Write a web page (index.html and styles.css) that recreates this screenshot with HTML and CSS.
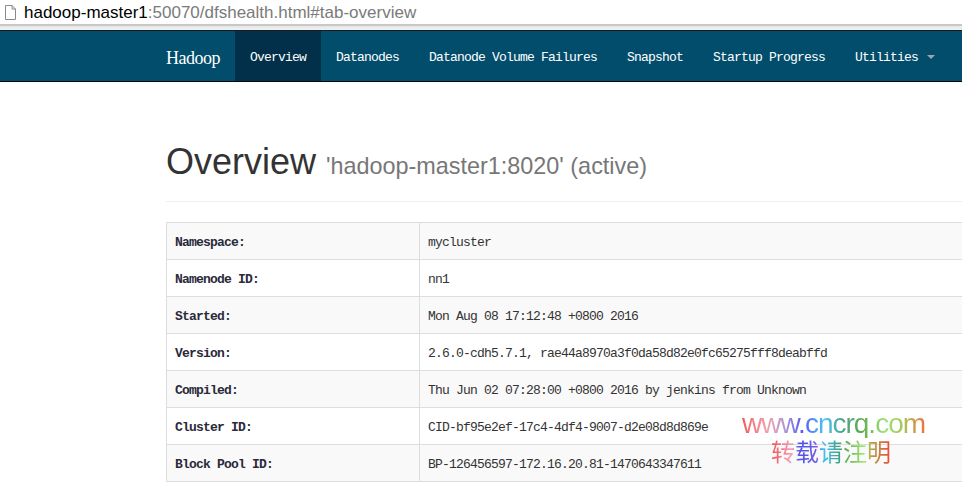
FILE: index.html
```html
<!DOCTYPE html>
<html lang="en">
<head>
<meta charset="utf-8">
<title>Namenode information</title>
<link rel="stylesheet" href="styles.css">
</head>
<body>
<div class="addr">
  <svg class="file-icon" width="11" height="15" viewBox="0 0 11 15">
    <path d="M0.5 0.5 H7 L10.5 4 V14.5 H0.5 Z" fill="#fff" stroke="#8a8a8a" stroke-width="1"/>
    <path d="M7 0.5 V4 H10.5" fill="none" stroke="#8a8a8a" stroke-width="1"/>
  </svg>
  <span class="host">hadoop-master1</span><span class="rest">:50070/dfshealth.html#tab-overview</span>
</div>
<div class="addr-shadow"></div>
<nav class="navbar">
  <div class="container nav-inner">
    <a class="brand" href="#">Hadoop</a>
    <ul class="nav">
      <li class="active"><a href="#">Overview</a></li>
      <li><a href="#">Datanodes</a></li>
      <li><a href="#">Datanode Volume Failures</a></li>
      <li><a href="#">Snapshot</a></li>
      <li><a href="#">Startup Progress</a></li>
      <li><a href="#">Utilities<span class="caret"></span></a></li>
    </ul>
  </div>
</nav>
<div class="container main">
  <div class="page-header">
    <h1>Overview <small>'hadoop-master1:8020' (active)</small></h1>
  </div>
  <table class="info">
    <colgroup><col class="c1"><col></colgroup>
    <tr><th>Namespace:</th><td>mycluster</td></tr>
    <tr><th>Namenode ID:</th><td>nn1</td></tr>
    <tr><th>Started:</th><td>Mon Aug 08 17:12:48 +0800 2016</td></tr>
    <tr><th>Version:</th><td>2.6.0-cdh5.7.1, rae44a8970a3f0da58d82e0fc65275fff8deabffd</td></tr>
    <tr><th>Compiled:</th><td>Thu Jun 02 07:28:00 +0800 2016 by jenkins from Unknown</td></tr>
    <tr><th>Cluster ID:</th><td>CID-bf95e2ef-17c4-4df4-9007-d2e08d8d869e</td></tr>
    <tr><th>Block Pool ID:</th><td>BP-126456597-172.16.20.81-1470643347611</td></tr>
  </table>
</div>
<div class="watermark">
  <div class="wm-url">www.cncrq.com</div>
  <div class="wm-cn">转载请注明</div>
</div>
</body>
</html>
```
FILE: styles.css
```css
html, body {
  margin: 0;
  padding: 0;
  overflow: hidden;
  background: #fff;
}
body {
  width: 962px;
  height: 488px;
  position: relative;
  font-family: "Liberation Sans", Arial, sans-serif;
  color: #333;
}
.addr {
  height: 22px;
  padding-top: 2px;
  line-height: 22px;
  font-size: 17px;
  white-space: nowrap;
  display: flex;
  align-items: flex-start;
}
.file-icon {
  margin: 3px 8px 0 5px;
  flex: none;
}
.addr .host { color: #000; }
.addr .rest { color: #7a7a7a; }
.addr-shadow {
  height: 6px;
  background: linear-gradient(#c8c8c8 0, #c8c8c8 2px, #e6e6e6 2px, #f2f2f2 100%);
}
.navbar {
  background: #034d6c;
  border-top: 1px solid #1a1a1a;
  border-bottom: 1px solid #080808;
  height: 50px;
}
.container {
  width: 1140px;
  margin-left: 151px;
  padding: 0 15px;
}
.nav-inner {
  display: flex;
  height: 50px;
  margin-left: 136px;
}
.brand {
  display: block;
  padding: 17px 15px 13px;
  line-height: 20px;
  font-family: "Liberation Serif", "Times New Roman", serif;
  font-size: 18px;
  letter-spacing: -0.5px;
  color: #fff;
  text-decoration: none;
}
.nav {
  display: flex;
  list-style: none;
  margin: 0;
  padding: 0;
}
.nav li a {
  display: block;
  padding: 17px 15px 13px;
  line-height: 20px;
  font-family: "Liberation Mono", "Courier New", monospace;
  font-size: 13px;
  letter-spacing: -0.8px;
  color: #fff;
  text-decoration: none;
  white-space: nowrap;
}
.nav li.active a {
  background: #02304b;
}
.caret {
  display: inline-block;
  width: 0;
  height: 0;
  margin-left: 9px;
  vertical-align: 2px;
  border-top: 4px solid #9aa6ae;
  border-left: 4px solid transparent;
  border-right: 4px solid transparent;
}
.main {
  margin-left: 151px;
}
.page-header {
  margin: 60px 0 20px;
  padding-bottom: 9px;
  border-bottom: 1px solid #eee;
}
.page-header h1 {
  margin: 0 0 10px;
  font-size: 36px;
  font-weight: 500;
  line-height: 1.1;
  color: #333;
  white-space: nowrap;
}
.page-header h1 small {
  font-size: 65%;
  font-weight: normal;
  color: #777;
}
.info {
  width: 100%;
  border-collapse: collapse;
  border: 1px solid #ddd;
  font-family: "Liberation Mono", "Courier New", monospace;
  font-size: 13px;
  letter-spacing: -0.8px;
  color: #333;
}
.info col.c1 { width: 253px; }
.info th, .info td {
  border: 1px solid #ddd;
  padding: 10px 8px 6px;
  line-height: 20px;
  text-align: left;
  vertical-align: top;
  white-space: nowrap;
}
.info th {
  font-weight: bold;
  color: #2a2a3a;
}
.info tr:nth-child(odd) { background: #f9f9f9; }
.watermark {
  position: absolute;
  left: 742px;
  top: 410px;
  width: 200px;
}
.wm-url {
  font-family: "Liberation Sans", Arial, sans-serif;
  font-size: 28px;
  letter-spacing: -1px;
  line-height: 28px;
  height: 28px;
  display: block;
  width: max-content;
  background: linear-gradient(90deg, #f35b5b 0%, #f4a0ac 14%, #b39ad2 23%, #5959f2 33%, #4cc4f7 45%, #4da38a 55%, #5fae4d 66%, #9fe27a 78%, #a6c65a 88%, #f0703e 100%);
  -webkit-background-clip: text;
  background-clip: text;
  color: transparent;
}
.wm-cn {
  margin-left: 29px;
  font-family: "Noto Sans CJK SC", sans-serif;
  font-size: 24px;
  line-height: 26px;
  display: inline-block;
  background: linear-gradient(90deg, #f25050 0%, #f6a0b8 17%, #5050f0 24%, #7060e0 38%, #40c0f0 44%, #40a080 58%, #60b050 63%, #a8e878 78%, #b0a040 84%, #f04838 100%);
  -webkit-background-clip: text;
  background-clip: text;
  color: transparent;
}
```
